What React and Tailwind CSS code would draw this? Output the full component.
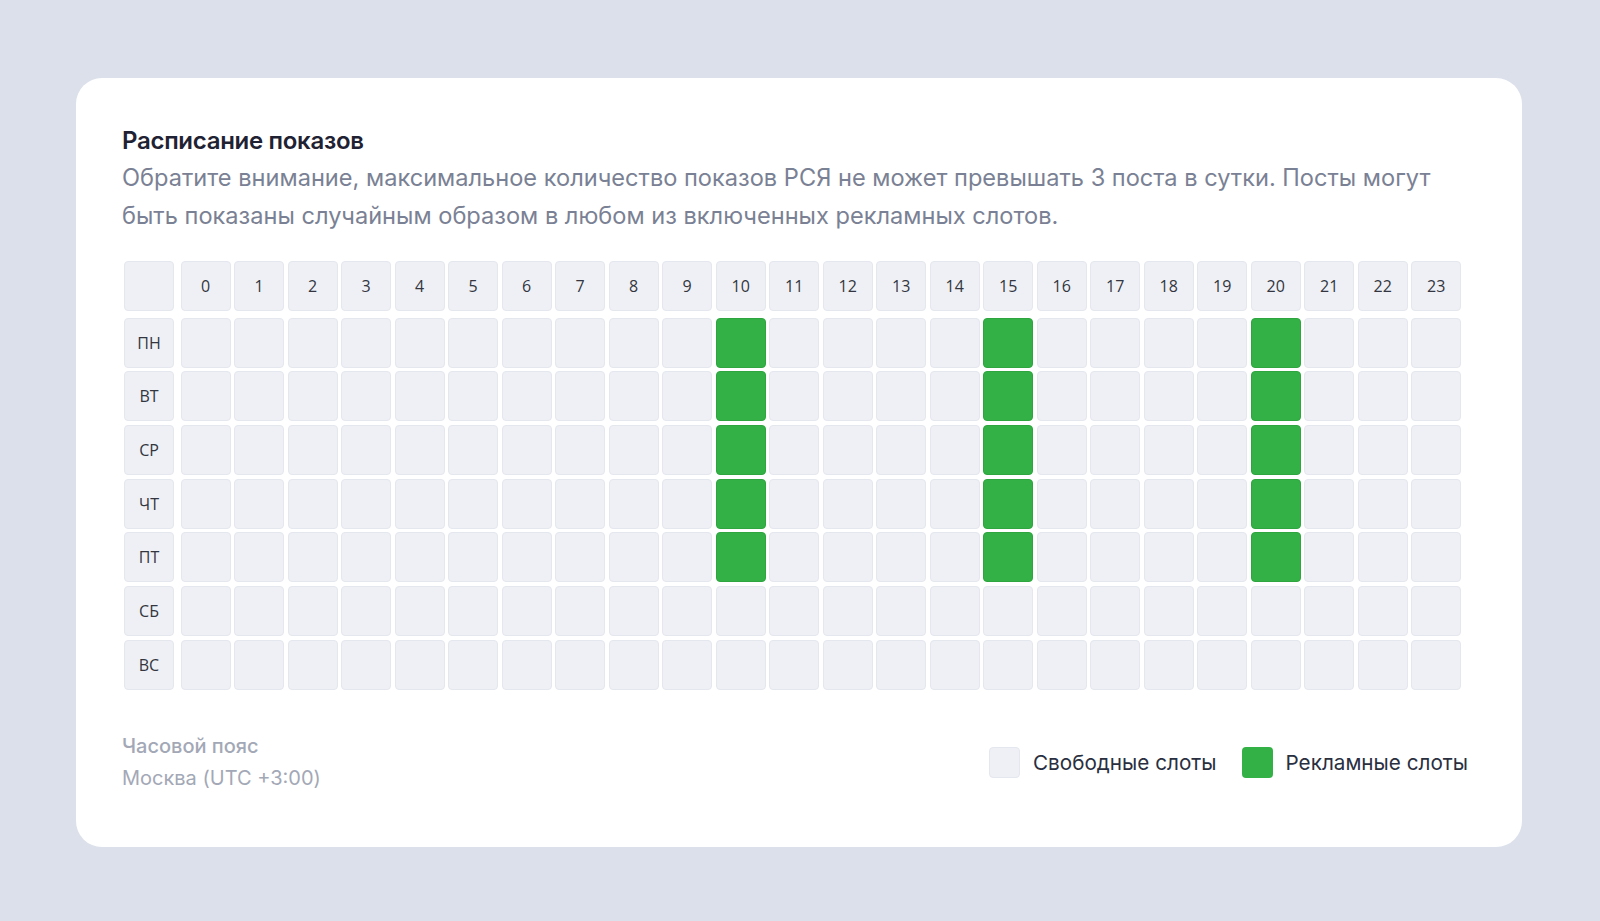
import React from 'react';

const days = ['ПН', 'ВТ', 'СР', 'ЧТ', 'ПТ', 'СБ', 'ВС'];
const hours = Array.from({ length: 24 }, (_, i) => i);
const adHours = [10, 15, 20];
const adDays = ['ПН', 'ВТ', 'СР', 'ЧТ', 'ПТ'];

const cell = 'w-[50px] h-[50px] shrink-0 rounded-[4px] border flex items-center justify-center';
const free = 'bg-[#eef0f5] border-[#e4e7ee]';
const busy = 'bg-[#33b146] border-[#2ea53f]';

export default function App() {
  return (
    <div className="min-h-screen bg-[#dbe0ea] pt-[78px] pl-[76px]" style={{ fontFamily: 'Inter, "Noto Sans", sans-serif' }}>
      <div className="w-[1446px] h-[769px] rounded-[26px] bg-white px-[46px] pt-[48px]">
        <h1 className="text-[24px] leading-[29px] font-semibold text-[#1f2233] tracking-[-0.3px]">Расписание показов</h1>
        <p className="mt-[4px] text-[23.6px] leading-[38px] text-[#7a8194] max-w-[1340px]">
          Обратите внимание, максимальное количество показов РСЯ не может превышать 3 поста в сутки. Посты могут быть показаны случайным образом в любом из включенных рекламных слотов.
        </p>

        <div className="mt-[26px] ml-[2px] flex flex-col gap-[3.7px] text-[16px] text-[#333640]" style={{ fontFamily: '"Open Sans", "Noto Sans", sans-serif' }}>
          <div className="flex mb-[3px]">
            <div className={`${cell} ${free} mr-[6.7px]`} />
            <div className="flex gap-[3.5px]">
              {hours.map(h => (
                <div key={h} className={`${cell} ${free}`}>{h}</div>
              ))}
            </div>
          </div>
          {days.map(d => (
            <div key={d} className="flex">
              <div className={`${cell} ${free} mr-[6.7px]`}>{d}</div>
              <div className="flex gap-[3.5px]">
                {hours.map(h => (
                  <div key={h} className={`${cell} ${adDays.includes(d) && adHours.includes(h) ? busy : free}`} />
                ))}
              </div>
            </div>
          ))}
        </div>

        <div className="mt-[40px] flex items-center justify-between pr-[8px]">
          <div className="text-[20px] leading-[32px] text-[#a3a8b6]">
            <div className="font-medium">Часовой пояс</div>
            <div>Москва (UTC +3:00)</div>
          </div>
          <div className="flex items-center text-[20.7px] text-[#2a2f3f] mt-[2px]">
            <div className="w-[31px] h-[31px] rounded-[4px] border bg-[#eef0f5] border-[#e4e7ee]" />
            <span className="ml-[13px]">Свободные слоты</span>
            <div className="ml-[25px] w-[31px] h-[31px] rounded-[4px] bg-[#33b146]" />
            <span className="ml-[13px]">Рекламные слоты</span>
          </div>
        </div>
      </div>
    </div>
  );
}
